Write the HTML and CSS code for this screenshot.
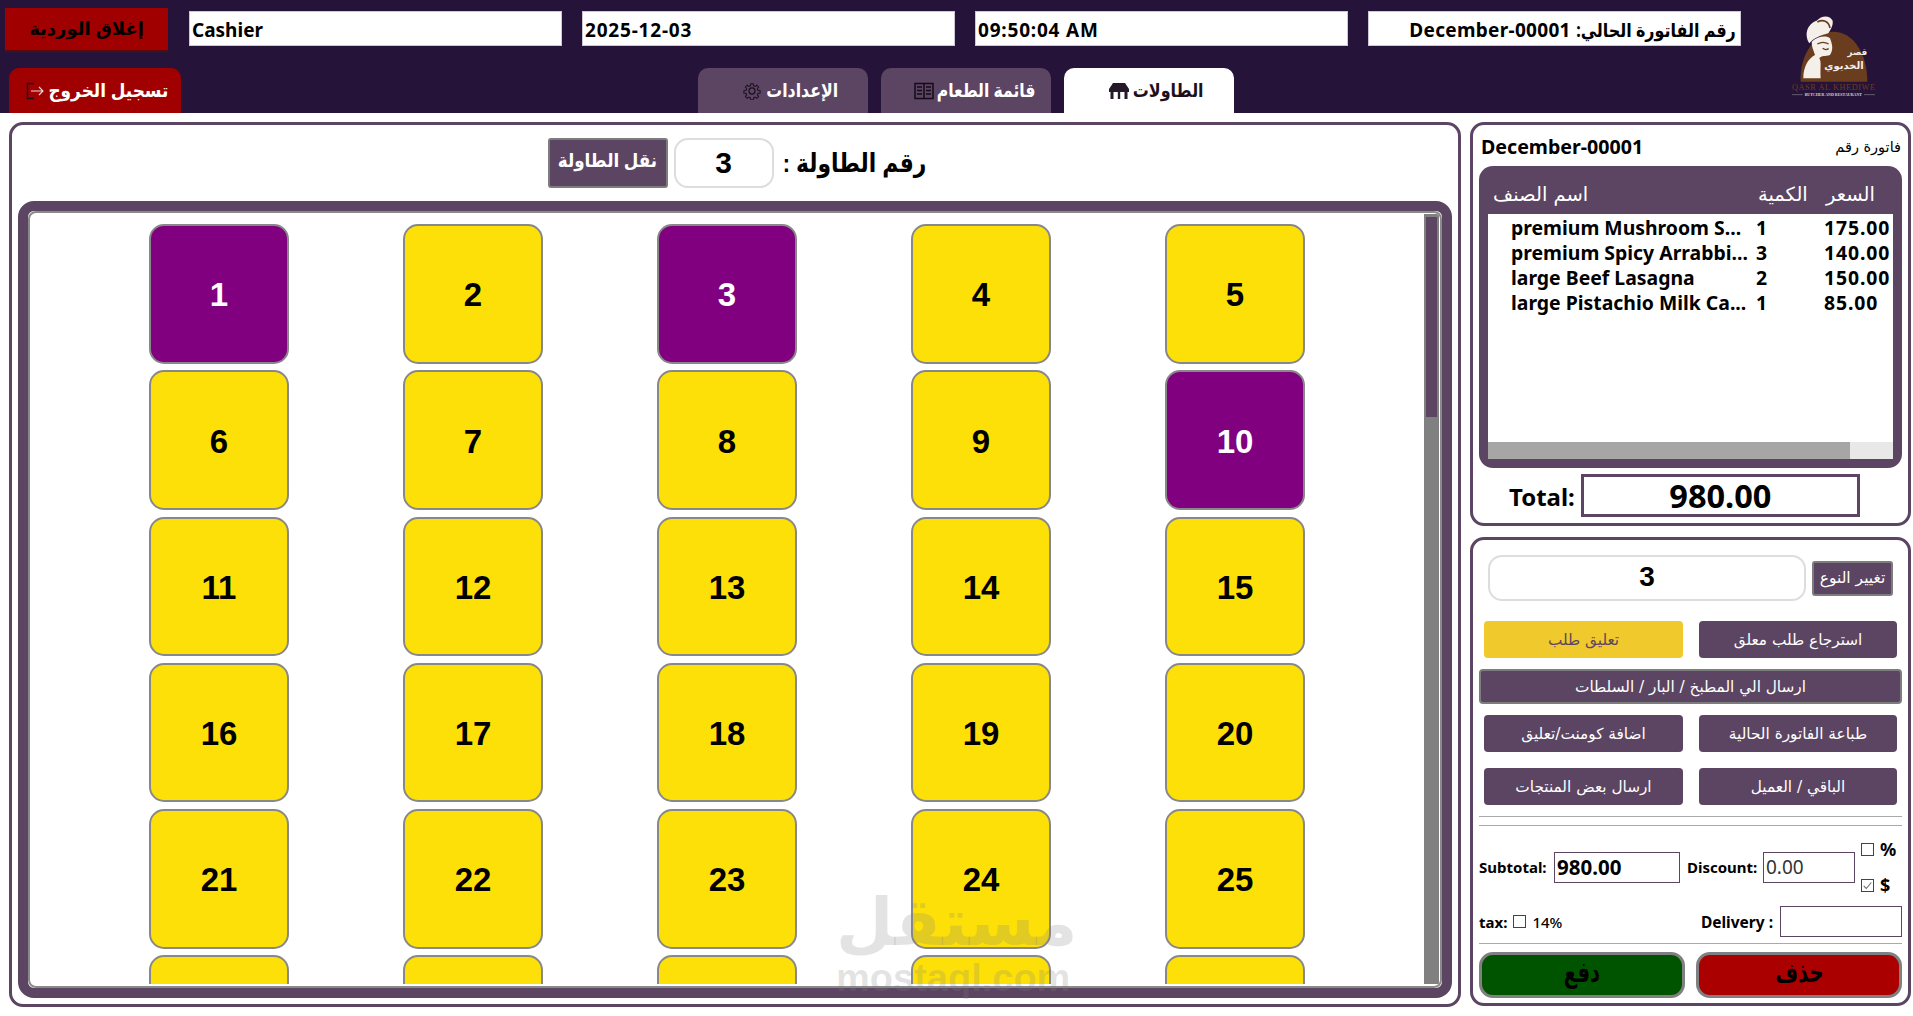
FILE: index.html
```html
<!DOCTYPE html>
<html lang="ar">
<head>
  <meta charset="UTF-8">
  <title>Qasr Al Khediwe - POS</title>
  <link rel="stylesheet" href="styles.css">
</head>
<body>
  <header class="topbar">
    <div class="topbar-main">
      <div class="top-row">
        <button class="btn-shift">إغلاق الوردية</button>
        <div class="field">Cashier</div>
        <div class="field field-num">2025-12-03</div>
        <div class="field field-num">09:50:04 AM</div>
        <div class="field field-rtl" dir="rtl"><span class="squeeze sq-inv">رقم الفاتورة الحالي:</span> December-00001</div>
      </div>
      <div class="tab-row">
        <button class="btn-logout">
          <svg class="ico-logout" viewBox="0 0 18 18" fill="none" stroke="#1c1020" stroke-width="1.4"><path d="M8 1.5H1.5V16.5H8"/><path d="M5 9H17M13 5L17 9L13 13" stroke="#e8dcdc" stroke-width="1.1"/></svg>
          <span class="squeeze sq-logout">تسجيل الخروج</span>
        </button>
        <nav class="tabs">
          <button class="tab">
            <svg class="ico" viewBox="0 0 20 20" fill="none" stroke="#1c1020" stroke-width="1.3"><circle cx="10" cy="10" r="3.4"/><path d="M8.5 1h3l.5 2.6 1.8.8 2.2-1.5 2.1 2.1-1.5 2.2.8 1.8 2.6.5v3l-2.6.5-.8 1.8 1.5 2.2-2.1 2.1-2.2-1.5-1.8.8-.5 2.6h-3l-.5-2.6-1.8-.8-2.2 1.5-2.1-2.1 1.5-2.2-.8-1.8-2.6-.5v-3l2.6-.5.8-1.8-1.5-2.2 2.1-2.1 2.2 1.5 1.8-.8z" transform="translate(1 1) scale(.9)"/></svg>
            <span class="squeeze sq-set">الإعدادات</span>
          </button>
          <button class="tab tab-menu">
            <svg class="ico" viewBox="0 0 20 18" fill="none" stroke="#140a18" stroke-width="1.5"><rect x="1" y="1.5" width="18" height="15"/><path d="M10 1.5V16.5"/><path d="M3 5H8M3 8.5H8M3 12H8M12 5H17M12 8.5H17M12 12H17" stroke-width="1.6"/></svg>
            <span class="squeeze sq-menu">قائمة الطعام</span>
          </button>
          <button class="tab tab-on">
            <svg class="ico" viewBox="0 0 20 18" fill="#241a2a"><path d="M4 1H16L20 7H0Z"/><rect x="0" y="7" width="20" height="3"/><rect x="1.5" y="9" width="3" height="8"/><rect x="15.5" y="9" width="3" height="8"/><rect x="8.8" y="9" width="2.4" height="8"/></svg>
            <span class="squeeze sq-tbl">الطاولات</span>
          </button>
        </nav>
      </div>
    </div>
    <div class="logo">
      <svg viewBox="0 0 399 345" width="133" height="115">
        <path d="M62 245C58 160 110 95 160 95C220 95 262 160 262 245Z" fill="#6b3d1f"/>
        <path d="M88 130C70 100 85 70 110 62C125 45 150 45 158 62C160 80 150 90 145 100C125 105 100 115 88 130Z" fill="#f4efe8"/>
        <path d="M112 66C128 58 146 62 150 84" fill="none" stroke="#6b3d1f" stroke-width="5"/>
        <path d="M95 125C110 110 140 105 150 115C158 135 160 150 150 165C135 170 125 165 118 175C125 185 120 205 122 235L70 235C70 200 85 175 105 165C100 150 95 140 95 125Z" fill="#f4efe8"/>
        <path d="M112 132C122 126 136 126 146 132M128 145C134 150 140 150 146 146" fill="none" stroke="#6b3d1f" stroke-width="4"/>
        <text x="232" y="165" class="logo-ar" font-size="26" text-anchor="middle">قصر</text>
        <text x="192" y="208" class="logo-ar" font-size="30" text-anchor="middle">الخديوي</text>
        <text x="36" y="270" class="logo-en" font-size="25" textLength="249">QASR AL KHEDIWE</text>
        <path d="M36 284H68M252 284H285" stroke="#8a7f86" stroke-width="2"/>
        <text x="74" y="289" class="logo-sub" font-size="12" textLength="172">BUTCHER AND RESTAURANT</text>
      </svg>
    </div>
  </header>

  <main class="content">
    <section class="panel tables-panel">
      <div class="table-head">
        <button class="btn-move"><span class="squeeze sq-move">نقل الطاولة</span></button>
        <div class="table-num">3</div>
        <h1 class="table-title" dir="rtl"><span class="squeeze sq-title">رقم الطاولة :</span></h1>
      </div>
      <div class="frame">
        <div class="frame-inner">
          <div class="tables">
            <button class="tbl busy">1</button>
            <button class="tbl">2</button>
            <button class="tbl busy">3</button>
            <button class="tbl">4</button>
            <button class="tbl">5</button>
            <button class="tbl">6</button>
            <button class="tbl">7</button>
            <button class="tbl">8</button>
            <button class="tbl">9</button>
            <button class="tbl busy">10</button>
            <button class="tbl">11</button>
            <button class="tbl">12</button>
            <button class="tbl">13</button>
            <button class="tbl">14</button>
            <button class="tbl">15</button>
            <button class="tbl">16</button>
            <button class="tbl">17</button>
            <button class="tbl">18</button>
            <button class="tbl">19</button>
            <button class="tbl">20</button>
            <button class="tbl">21</button>
            <button class="tbl">22</button>
            <button class="tbl">23</button>
            <button class="tbl">24</button>
            <button class="tbl">25</button>
            <button class="tbl"></button>
            <button class="tbl"></button>
            <button class="tbl"></button>
            <button class="tbl"></button>
            <button class="tbl"></button>
          </div>
          <div class="vscroll"><div class="vthumb"></div></div>
        </div>
      </div>
    </section>

    <aside class="side">
      <section class="panel invoice">
        <div class="invoice-head">
          <span class="invoice-no">December-00001</span>
          <span class="invoice-lbl">فاتورة رقم</span>
        </div>
        <div class="items">
          <div class="items-head">
            <span>اسم الصنف</span>
            <span>الكمية</span>
            <span>السعر</span>
          </div>
          <div class="items-body">
            <div class="item"><span>premium Mushroom S...</span><span>1</span><span class="price">175.00</span></div>
            <div class="item"><span>premium Spicy Arrabbi...</span><span>3</span><span class="price">140.00</span></div>
            <div class="item"><span>large Beef Lasagna</span><span>2</span><span class="price">150.00</span></div>
            <div class="item"><span>large Pistachio Milk Ca...</span><span>1</span><span class="price">85.00</span></div>
          </div>
          <div class="hscroll"><div class="hthumb"></div></div>
        </div>
        <div class="total">
          <span class="total-lbl">Total:</span>
          <div class="total-val">980.00</div>
        </div>
      </section>

      <section class="panel actions">
        <div class="type-row">
          <div class="type-val">3</div>
          <button class="btn-type">تغيير النوع</button>
        </div>
        <div class="btn-grid first">
          <button class="act act-yellow">تعليق طلب</button>
          <button class="act">استرجاع طلب معلق</button>
        </div>
        <button class="act act-wide">ارسال الي المطبخ / البار / السلطات</button>
        <div class="btn-grid">
          <button class="act">اضافة كومنت/تعليق</button>
          <button class="act">طباعة الفاتورة الحالية</button>
        </div>
        <div class="btn-grid">
          <button class="act">ارسال بعض المنتجات</button>
          <button class="act">الباقي / العميل</button>
        </div>
        <hr class="line line-a">
        <hr class="line line-b">
        <div class="sum-row">
          <span class="lbl lbl-sub">Subtotal:</span>
          <div class="box box-sub">980.00</div>
          <span class="lbl lbl-disc">Discount:</span>
          <div class="box box-disc">0.00</div>
          <div class="units">
            <div class="unit"><span class="chk"></span>%</div>
            <div class="unit"><span class="chk"><svg viewBox="0 0 13 13" fill="none" stroke="#666" stroke-width="1.2"><path d="M2 7L5 10L11 3"/></svg></span>$</div>
          </div>
        </div>
        <div class="tax-row">
          <div class="tax">
            <span class="lbl">tax:</span>
            <span class="chk"></span>
            <span class="tax-pct">14%</span>
          </div>
          <div class="delivery">
            <span class="lbl">Delivery :</span>
            <div class="box box-del"></div>
          </div>
        </div>
        <hr class="line line-c">
        <div class="pay-row">
          <button class="pay pay-green"><span class="squeeze sq-pay">دفع</span></button>
          <button class="pay pay-red"><span class="squeeze sq-pay">حذف</span></button>
        </div>
      </section>
    </aside>
  </main>

  <div class="watermark">
    <div class="wm-ar">مستقل</div>
    <div class="wm-en">mostaql.com</div>
  </div>
</body>
</html>
```

FILE: styles.css
```css
* {
  box-sizing: border-box;
}
body {
  margin: 0;
  width: 1913px;
  height: 1016px;
  overflow: hidden;
  position: relative;
  background: white;
  font-family: "Noto Sans", "DejaVu Sans", sans-serif;
  color: black;
}
button {
  font-family: "Liberation Sans", "DejaVu Sans", sans-serif;
  cursor: pointer;
  padding: 0;
}

/* arabic only comes in a wide face here, so pull it in */
.squeeze {
  display: inline-block;
  transform: scaleX(0.84);
}
.sq-inv {
  margin: 0 -15px;
}
.sq-logout {
  transform: scaleX(0.89);
  margin: 0 -7px;
}
.sq-set {
  transform: scaleX(0.83);
  margin: 0 -7px;
}
.sq-menu {
  transform: scaleX(0.82);
  margin: 0 -11px;
}
.sq-tbl {
  margin: 0 -7px;
}
.sq-move {
  transform: scaleX(0.88);
}
.sq-title {
  margin: 0 -13px;
}
.sq-pay {
  transform: scaleX(0.7);
}

/* top bar */
.topbar {
  height: 113px;
  background-color: #25133a;
  display: flex;
}
.topbar-main {
  width: 1780px;
  padding-top: 8px;
  display: flex;
  flex-direction: column;
  justify-content: space-between;
}
.top-row {
  display: flex;
  align-items: flex-start;
  gap: 20px;
  padding-left: 5px;
}
.btn-shift {
  width: 163px;
  height: 44px;
  margin-right: 1px;
  background-color: #a00000;
  border: none;
  border-bottom: 2px solid #5a0a0a;
  font-size: 18px;
  font-weight: bold;
  color: black;
}
.field {
  width: 373px;
  height: 35px;
  margin-top: 3px;
  padding: 0 2px;
  background-color: white;
  border: 1px solid #ccc8d4;
  font-size: 19px;
  font-weight: bold;
  line-height: 36px;
  white-space: nowrap;
}
.field-num {
  letter-spacing: 0.8px;
}
.field-rtl {
  padding-right: 4px;
  letter-spacing: 0.3px;
}
.tab-row {
  display: flex;
  padding-left: 9px;
}
.btn-logout {
  width: 172px;
  height: 45px;
  padding-left: 4px;
  background-color: #a00000;
  border: none;
  border-radius: 10px 10px 0 0;
  color: white;
  font-size: 19px;
  font-weight: bold;
  display: flex;
  align-items: center;
  justify-content: center;
  gap: 4px;
}
.ico-logout {
  width: 18px;
  height: 18px;
}
.tabs {
  display: flex;
  gap: 13px;
  margin-left: 517px;
}
.tab {
  width: 170px;
  height: 45px;
  padding-left: 15px;
  background-color: #5c4562;
  border: none;
  border-radius: 10px 10px 0 0;
  color: white;
  font-size: 19px;
  font-weight: bold;
  display: flex;
  align-items: center;
  justify-content: center;
  gap: 4px;
}
.tab-menu {
  gap: 3px;
  padding-left: 17px;
}
.tab-on {
  background-color: white;
  color: #1c1020;
}
.ico {
  width: 20px;
  height: 18px;
}
.logo {
  width: 133px;
}
.logo svg {
  display: block;
}
.logo-ar {
  font-family: "DejaVu Sans", sans-serif;
  font-weight: bold;
  fill: #f4efe8;
}
.logo-en {
  font-family: "Liberation Serif", serif;
  fill: #6b3d1f;
}
.logo-sub {
  font-family: "Liberation Serif", serif;
  font-weight: bold;
  fill: #d8d2d6;
}

/* layout */
.content {
  display: flex;
  gap: 9px;
  padding: 9px 2px 0 9px;
}
.panel {
  background: white;
  border: 3px solid #5c4562;
  border-radius: 14px;
}
.tables-panel {
  width: 1452px;
  height: 885px;
  padding: 13px 6px 5px;
}
.side {
  width: 441px;
  display: flex;
  flex-direction: column;
  gap: 11px;
}

/* tables */
.table-head {
  display: flex;
  justify-content: center;
  align-items: center;
  height: 50px;
  padding-left: 4px;
}
.btn-move {
  width: 120px;
  height: 50px;
  background-color: #5c4562;
  border: 2px solid #7d7d7d;
  border-radius: 3px;
  color: white;
  font-size: 19px;
  font-weight: bold;
  padding-bottom: 6px;
}
.table-num {
  width: 100px;
  height: 50px;
  margin-left: 6px;
  border: 2px solid #ddd;
  border-radius: 14px;
  text-align: center;
  font-family: "Liberation Sans", sans-serif;
  font-size: 30px;
  font-weight: bold;
  line-height: 46px;
}
.table-title {
  margin: 0 0 0 8px;
  font-family: "Liberation Sans", "DejaVu Sans", sans-serif;
  font-size: 26px;
  font-weight: bold;
}
.frame {
  height: 797px;
  margin-top: 13px;
  border: 10px solid #5c4562;
  border-radius: 16px;
}
.frame-inner {
  height: 777px;
  border: 2px solid #8a8a8a;
  border-radius: 8px;
  padding: 1px 1px 2px 0;
  display: flex;
  overflow: hidden;
}
.tables {
  flex: 1;
  height: 770px;
  overflow: hidden;
  padding: 10px 0 0 119px;
  display: grid;
  grid-template-columns: repeat(5, 140px);
  grid-auto-rows: 139.5px;
  column-gap: 114px;
  row-gap: 6.8px;
}
.tbl {
  border: 2px solid #888;
  border-radius: 15px;
  background-color: #fde008;
  color: black;
  font-size: 33px;
  font-weight: bold;
  padding-top: 3px;
}
.tbl.busy {
  background-color: #800080;
  color: white;
}
.vscroll {
  width: 15px;
  height: 770px;
  background-color: #808080;
  padding: 3px 2px;
}
.vthumb {
  width: 11px;
  height: 200px;
  background-color: #5c4562;
}

/* invoice */
.invoice {
  height: 404px;
  padding: 0 6px;
}
.invoice-head {
  height: 41px;
  padding: 2px 1px 0 2px;
  display: flex;
  justify-content: space-between;
  align-items: center;
}
.invoice-no {
  font-size: 19.6px;
  font-weight: bold;
}
.invoice-lbl {
  font-size: 14.5px;
  font-family: "DejaVu Sans", sans-serif;
}
.items {
  height: 302px;
  background-color: #5c4562;
  border-radius: 14px;
  padding: 0 9px 9px;
}
.items-head {
  height: 48px;
  padding: 8px 0 0 5px;
  display: grid;
  grid-template-columns: 265px 68px 1fr;
  align-items: center;
  color: white;
  font-size: 19.5px;
  font-family: "DejaVu Sans", sans-serif;
}
.items-body {
  height: 228px;
  background: white;
  padding-left: 23px;
  font-weight: bold;
  font-size: 19.4px;
}
.item {
  height: 25px;
  padding-bottom: 2px;
  display: grid;
  grid-template-columns: 245px 68px 1fr;
  align-items: center;
  white-space: nowrap;
}
.price {
  letter-spacing: 0.9px;
}
.hscroll {
  height: 17px;
  background-color: #e8e8e8;
}
.hthumb {
  width: 362px;
  height: 17px;
  background-color: #a6a6a6;
}
.total {
  display: flex;
  align-items: center;
  gap: 6px;
  margin-top: 6px;
  padding-left: 30px;
}
.total-lbl {
  font-size: 24px;
  font-weight: bold;
  padding-top: 1px;
}
.total-val {
  width: 279px;
  height: 43px;
  border: 3px solid #5c4562;
  text-align: center;
  font-size: 32.5px;
  font-weight: bold;
  line-height: 37px;
}

/* actions */
.actions {
  height: 469px;
  padding: 15px 6px 0;
}
.type-row {
  display: flex;
  align-items: center;
  gap: 6px;
  padding-left: 9px;
}
.type-val {
  width: 318px;
  height: 46px;
  border: 2px solid #ddd;
  border-radius: 14px;
  text-align: center;
  font-family: "Liberation Sans", sans-serif;
  font-size: 28px;
  font-weight: bold;
  line-height: 40px;
}
.btn-type {
  width: 81px;
  height: 35px;
  background-color: #5c4562;
  border: 2px solid #7d7d7d;
  border-radius: 3px;
  color: white;
  font-family: "DejaVu Sans", sans-serif;
  font-size: 15.5px;
}
.btn-grid {
  display: grid;
  grid-template-columns: 199px 198px;
  column-gap: 16px;
  padding-left: 5px;
  margin-top: 11px;
}
.btn-grid.first {
  margin-top: 20px;
}
.btn-grid + .btn-grid {
  margin-top: 16px;
}
.act {
  height: 37px;
  background-color: #5c4562;
  border: none;
  border-radius: 4px;
  color: white;
  font-family: "DejaVu Sans", sans-serif;
  font-size: 15.3px;
}
.act-yellow {
  background-color: #f0c92d;
  color: #5c4562;
}
.act-wide {
  display: block;
  width: 423px;
  height: 35px;
  margin-top: 11px;
  border: 2px solid #7d7d7d;
}
.line {
  height: 1px;
  margin: 0;
  border: none;
  background-color: #aaa;
}
.line-a {
  margin-top: 11px;
}
.line-b {
  margin-top: 8px;
}
.line-c {
  margin-top: 6px;
}
.lbl {
  font-size: 15px;
  font-weight: bold;
  white-space: nowrap;
}
.box {
  height: 31px;
  border: 1px solid #5c4562;
  font-size: 20px;
  line-height: 29px;
  padding-left: 2px;
}
.sum-row {
  height: 60px;
  margin-top: 11px;
  display: flex;
  align-items: center;
}
.lbl-sub {
  width: 75px;
}
.box-sub {
  width: 126px;
  font-weight: bold;
  font-size: 20.5px;
}
.lbl-disc {
  width: 77px;
  padding-left: 7px;
}
.box-disc {
  width: 92px;
  margin-left: 6px;
  color: #333;
  font-size: 19px;
}
.units {
  margin-left: 6px;
  display: flex;
  flex-direction: column;
  gap: 18px;
}
.unit {
  display: flex;
  align-items: center;
  gap: 6px;
  font-size: 18px;
  font-weight: bold;
  height: 18px;
}
.chk {
  display: inline-block;
  width: 13px;
  height: 13px;
  border: 1px solid #444;
  background: white;
  flex: none;
}
.chk svg {
  display: block;
  width: 11px;
  height: 11px;
}
.tax-row {
  height: 31px;
  margin-top: 9px;
  display: flex;
  justify-content: space-between;
  align-items: center;
}
.tax {
  display: flex;
  align-items: center;
  gap: 6px;
}
.tax-pct {
  font-size: 15px;
  font-weight: 500;
}
.delivery {
  display: flex;
  align-items: center;
  gap: 7px;
}
.delivery .lbl {
  font-size: 15.5px;
}
.box-del {
  width: 122px;
}
.pay-row {
  display: grid;
  grid-template-columns: 206px 206px;
  column-gap: 11px;
  margin-top: 8px;
}
.pay {
  height: 46px;
  padding-bottom: 5px;
  border: 3px solid #808080;
  border-radius: 14px;
  color: black;
  font-size: 28px;
  font-weight: bold;
}
.pay-green {
  background-color: #005400;
}
.pay-red {
  background-color: #aa0000;
}

/* site watermark over the shot */
.watermark {
  position: absolute;
  left: 836px;
  top: 885px;
  width: 231px;
  text-align: center;
  color: rgba(128, 128, 128, 0.22);
  pointer-events: none;
}
.wm-ar {
  font-family: "DejaVu Sans", sans-serif;
  font-size: 66px;
  font-weight: bold;
  line-height: 75px;
}
.wm-en {
  font-family: "Liberation Sans", sans-serif;
  font-size: 38px;
  font-weight: bold;
  line-height: 36px;
}
```
